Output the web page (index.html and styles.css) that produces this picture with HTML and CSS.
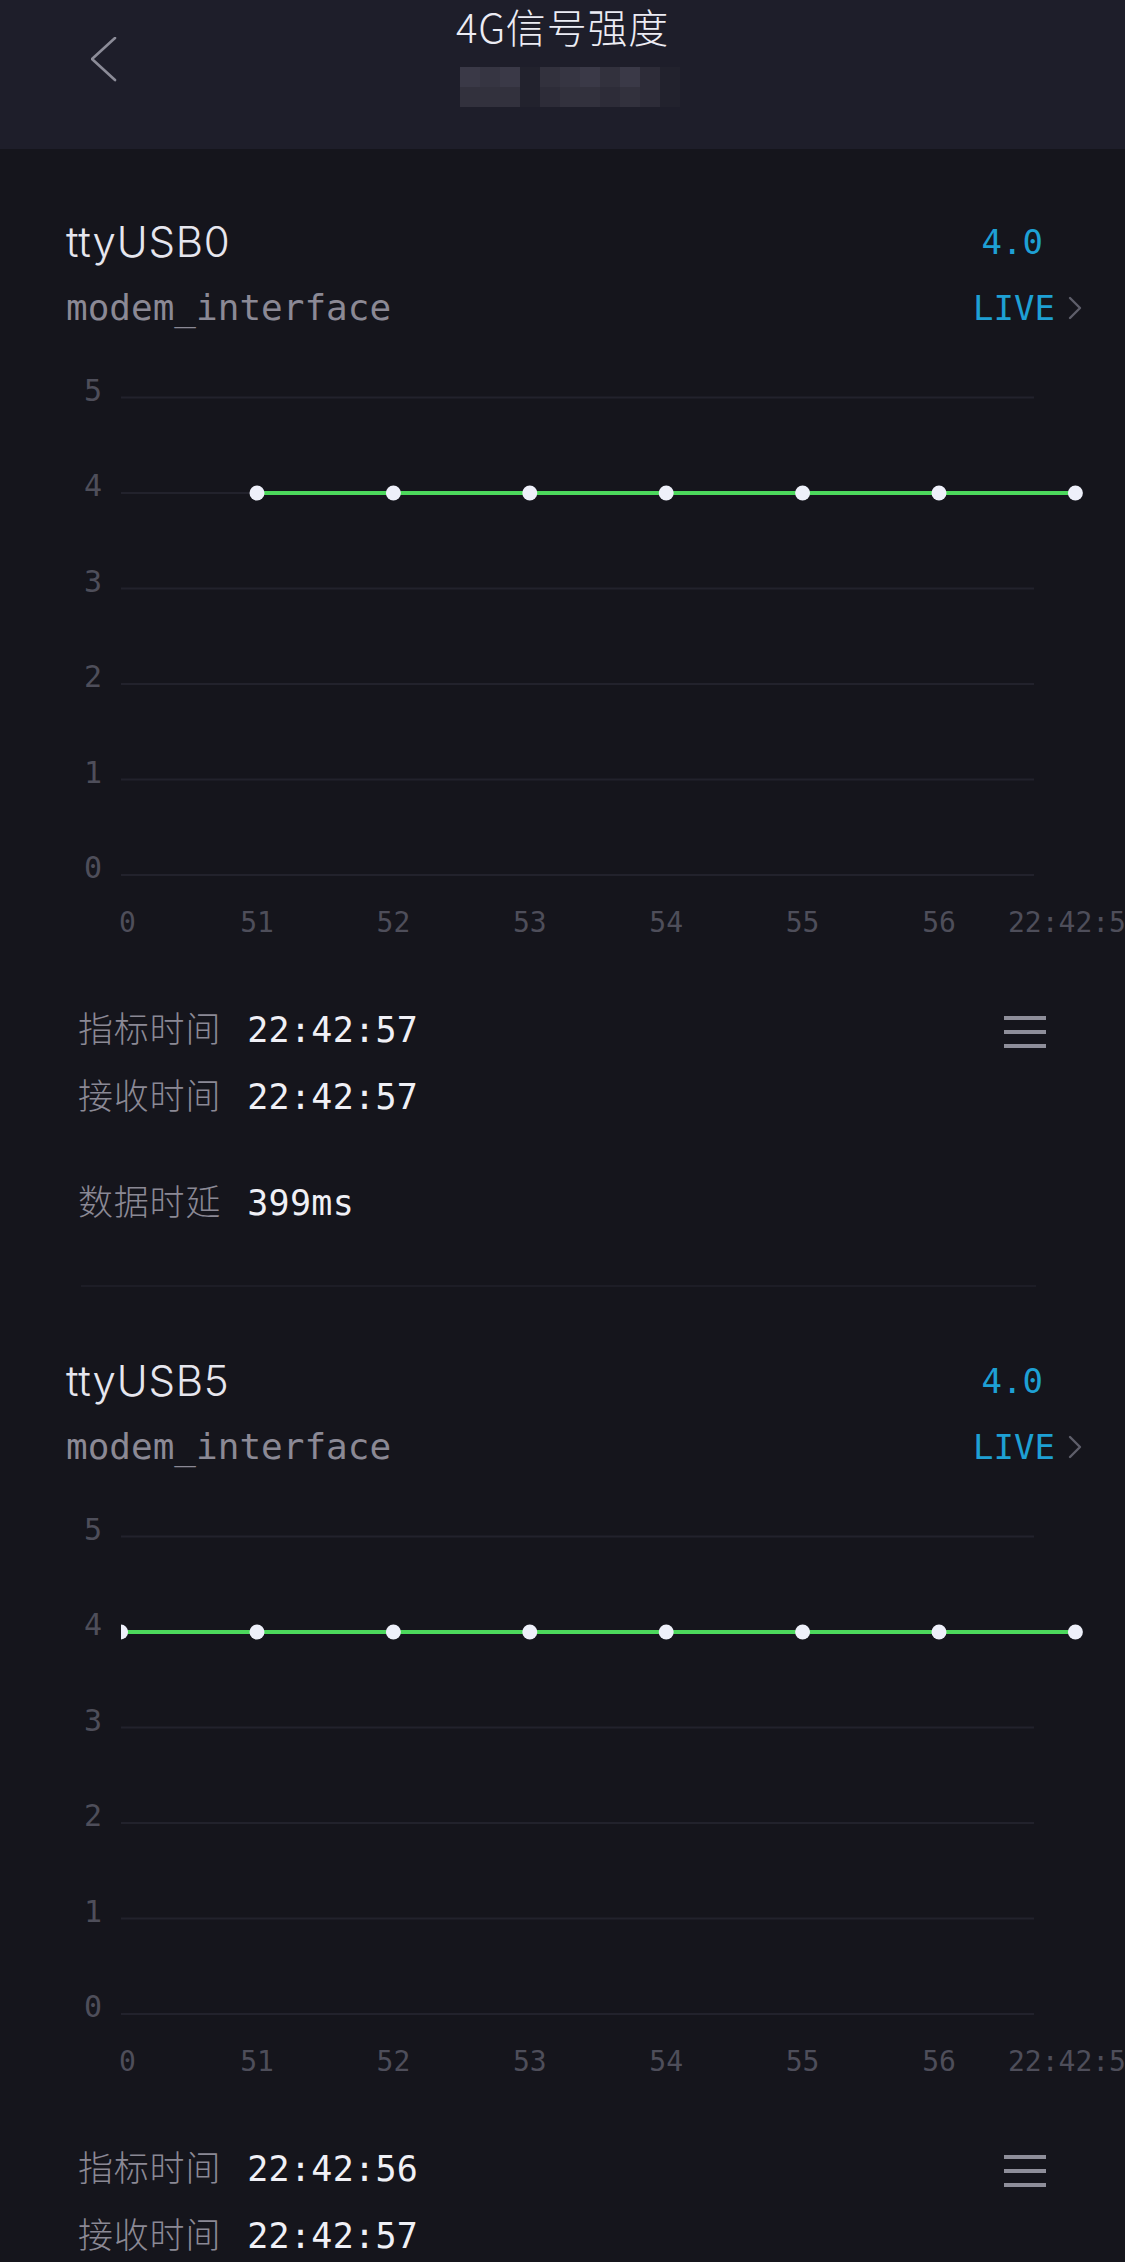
FILE: index.html
```html
<!DOCTYPE html>
<html lang="zh-CN">
<head>
<meta charset="utf-8">
<title>4G信号强度</title>
<link rel="stylesheet" href="styles.css">
</head>
<body>
<header class="topbar">
  <div class="back">
    <svg width="26" height="46" viewBox="0 0 26 46"><polyline class="back-stroke" points="24,1 1,22 24,43"/></svg>
  </div>
  <div class="titles">
    <h1 class="title">4G信号强度</h1>
    <div class="mosaic">
      <i class="s1"></i><i class="s2"></i><i class="s1"></i><i class="s0"></i><i class="s3"></i><i class="s2"></i><i class="s1"></i><i class="s3"></i><i class="s1"></i><i class="s4"></i><i class="s0"></i>
      <i class="s3"></i><i class="s3"></i><i class="s3"></i><i class="s0"></i><i class="s4"></i><i class="s3"></i><i class="s3"></i><i class="s4"></i><i class="s3"></i><i class="s4"></i><i class="s0"></i>
    </div>
  </div>
  <div></div>
</header>

<main>
  <section class="card">
    <div class="card-head">
      <div class="name">ttyUSB0</div>
      <div class="value">4.0</div>
      <div class="iface">modem_interface</div>
      <div class="live">LIVE<svg class="chev" width="16" height="24" viewBox="0 0 16 24"><polyline points="3,2 13,12 3,22"/></svg></div>
    </div>
    <svg class="chart" width="1125" height="622" viewBox="0 0 1125 622">
      <defs><clipPath id="plot1"><rect x="121" y="0" width="1004" height="622"/></clipPath></defs>
      <g class="grid">
        <line x1="121" y1="59.5" x2="1034" y2="59.5"/>
        <line x1="121" y1="155" x2="1034" y2="155"/>
        <line x1="121" y1="250.5" x2="1034" y2="250.5"/>
        <line x1="121" y1="346" x2="1034" y2="346"/>
        <line x1="121" y1="441.5" x2="1034" y2="441.5"/>
        <line x1="121" y1="537" x2="1034" y2="537"/>
      </g>
      <g class="ylab">
        <text x="102" y="62.5">5</text>
        <text x="102" y="158">4</text>
        <text x="102" y="253.5">3</text>
        <text x="102" y="349">2</text>
        <text x="102" y="444.5">1</text>
        <text x="102" y="540">0</text>
      </g>
      <g class="xlab">
        <text class="first" x="119" y="594">0</text>
        <text x="257" y="594">51</text>
        <text x="393.4" y="594">52</text>
        <text x="529.8" y="594">53</text>
        <text x="666.2" y="594">54</text>
        <text x="802.6" y="594">55</text>
        <text x="939" y="594">56</text>
        <text x="1075.4" y="594">22:42:57</text>
      </g>
      <g clip-path="url(#plot1)">
        <polyline class="series" points="257,155 1075.4,155"/>
        <g class="dots">
          <circle cx="257" cy="155" r="7.5"/>
          <circle cx="393.4" cy="155" r="7.5"/>
          <circle cx="529.8" cy="155" r="7.5"/>
          <circle cx="666.2" cy="155" r="7.5"/>
          <circle cx="802.6" cy="155" r="7.5"/>
          <circle cx="939" cy="155" r="7.5"/>
          <circle cx="1075.4" cy="155" r="7.5"/>
        </g>
      </g>
    </svg>
    <div class="info">
      <div class="row">
        <span class="label">指标时间</span><span class="val">22:42:57</span>
        <svg class="menu" width="42" height="34" viewBox="0 0 42 34"><rect x="0" y="0" width="42" height="4"/><rect x="0" y="14" width="42" height="4"/><rect x="0" y="28" width="42" height="4"/></svg>
      </div>
      <div class="row">
        <span class="label">接收时间</span><span class="val">22:42:57</span>
      </div>
      <div class="row delay">
        <span class="label">数据时延</span><span class="val">399ms</span>
      </div>
    </div>
    <div class="divider"></div>
  </section>

  <section class="card">
    <div class="card-head">
      <div class="name">ttyUSB5</div>
      <div class="value">4.0</div>
      <div class="iface">modem_interface</div>
      <div class="live">LIVE<svg class="chev" width="16" height="24" viewBox="0 0 16 24"><polyline points="3,2 13,12 3,22"/></svg></div>
    </div>
    <svg class="chart" width="1125" height="622" viewBox="0 0 1125 622">
      <defs><clipPath id="plot2"><rect x="121" y="0" width="1004" height="622"/></clipPath></defs>
      <g class="grid">
        <line x1="121" y1="59.5" x2="1034" y2="59.5"/>
        <line x1="121" y1="155" x2="1034" y2="155"/>
        <line x1="121" y1="250.5" x2="1034" y2="250.5"/>
        <line x1="121" y1="346" x2="1034" y2="346"/>
        <line x1="121" y1="441.5" x2="1034" y2="441.5"/>
        <line x1="121" y1="537" x2="1034" y2="537"/>
      </g>
      <g class="ylab">
        <text x="102" y="62.5">5</text>
        <text x="102" y="158">4</text>
        <text x="102" y="253.5">3</text>
        <text x="102" y="349">2</text>
        <text x="102" y="444.5">1</text>
        <text x="102" y="540">0</text>
      </g>
      <g class="xlab">
        <text class="first" x="119" y="594">0</text>
        <text x="257" y="594">51</text>
        <text x="393.4" y="594">52</text>
        <text x="529.8" y="594">53</text>
        <text x="666.2" y="594">54</text>
        <text x="802.6" y="594">55</text>
        <text x="939" y="594">56</text>
        <text x="1075.4" y="594">22:42:57</text>
      </g>
      <g clip-path="url(#plot2)">
        <polyline class="series" points="120.6,155 1075.4,155"/>
        <g class="dots">
          <circle cx="120.6" cy="155" r="7.5"/>
          <circle cx="257" cy="155" r="7.5"/>
          <circle cx="393.4" cy="155" r="7.5"/>
          <circle cx="529.8" cy="155" r="7.5"/>
          <circle cx="666.2" cy="155" r="7.5"/>
          <circle cx="802.6" cy="155" r="7.5"/>
          <circle cx="939" cy="155" r="7.5"/>
          <circle cx="1075.4" cy="155" r="7.5"/>
        </g>
      </g>
    </svg>
    <div class="info">
      <div class="row">
        <span class="label">指标时间</span><span class="val">22:42:56</span>
        <svg class="menu" width="42" height="34" viewBox="0 0 42 34"><rect x="0" y="0" width="42" height="4"/><rect x="0" y="14" width="42" height="4"/><rect x="0" y="28" width="42" height="4"/></svg>
      </div>
      <div class="row">
        <span class="label">接收时间</span><span class="val">22:42:57</span>
      </div>
    </div>
  </section>
</main>
</body>
</html>
```

FILE: styles.css
```css
* { box-sizing: border-box; }

html, body {
  margin: 0;
  padding: 0;
  background: #15151c;
}

body {
  font-family: "Noto Sans CJK SC", "Noto Sans", sans-serif;
  color: #e8e8f0;
  overflow-x: hidden;
}

/* ---------- header ---------- */
.topbar {
  height: 149px;
  background: #1e1e2a;
  display: grid;
  grid-template-columns: 1fr auto 1fr;
  align-items: start;
}

.back {
  padding: 37px 0 0 91px;
}

.back svg { display: block; }

.back-stroke {
  fill: none;
  stroke: #8c8c98;
  stroke-width: 2.6;
  stroke-linecap: round;
  stroke-linejoin: round;
}

.titles {
  display: flex;
  flex-direction: column;
  align-items: center;
}

.title {
  margin: 1px 0 0;
  font-family: "Noto Sans CJK SC", sans-serif;
  font-weight: 300;
  font-size: 40px;
  line-height: 50px;
  color: #ececf4;
  letter-spacing: 0.8px;
}

.mosaic {
  margin: 16px 0 0 15px;
  display: grid;
  grid-template-columns: repeat(11, 20px);
  grid-template-rows: 20px 20px;
}

.mosaic i { display: block; }
.s0 { background: #22222d; }
.s1 { background: #3a3947; }
.s2 { background: #363542; }
.s3 { background: #32313d; }
.s4 { background: #2d2c38; }

/* ---------- card ---------- */
.card {
  padding-top: 63px;
}

.card-head {
  display: grid;
  grid-template-columns: 1fr auto;
  grid-template-rows: 66px 60px;
  padding: 0 42px 0 66px;
}

.name {
  font-family: Inter, "Noto Sans", sans-serif;
  font-weight: 300;
  font-size: 42px;
  line-height: 60px;
  color: #e6e6ee;
  letter-spacing: 0.8px;
}

.value {
  font-family: "DejaVu Sans Mono", monospace;
  font-size: 34px;
  line-height: 60px;
  color: #1ea0d4;
  margin-right: 40px;
  justify-self: end;
}

.iface {
  font-family: "DejaVu Sans Mono", monospace;
  font-size: 36px;
  line-height: 60px;
  color: #8b8995;
}

.live {
  display: flex;
  align-items: center;
  font-family: "DejaVu Sans Mono", monospace;
  font-size: 34px;
  line-height: 60px;
  color: #1ea0d4;
  justify-self: end;
}

.chev {
  display: block;
  margin-left: 12px;
}

.chev polyline {
  fill: none;
  stroke: #5e5e6a;
  stroke-width: 2.4;
  stroke-linecap: round;
  stroke-linejoin: round;
}

/* ---------- chart ---------- */
.chart {
  display: block;
}

.grid line {
  stroke: #22222c;
  stroke-width: 2;
}

.ylab text {
  font-family: "DejaVu Sans Mono", monospace;
  font-size: 30px;
  fill: #4e4e5a;
  text-anchor: end;
}

.xlab text {
  font-family: "DejaVu Sans Mono", monospace;
  font-size: 28px;
  fill: #4e4e5a;
  text-anchor: middle;
}

.xlab text.first {
  text-anchor: start;
}

.series {
  fill: none;
  stroke: #4cd85c;
  stroke-width: 4;
}

.dots circle {
  fill: #eef0fa;
}

/* ---------- info ---------- */
.info {
  padding: 33px 0 0 78px;
}

.row {
  display: flex;
  align-items: baseline;
  height: 67px;
}

.row.delay {
  margin-top: 39px;
}

.label {
  font-family: "Noto Sans CJK SC", sans-serif;
  font-weight: 300;
  font-size: 35px;
  line-height: 67px;
  color: #8b8995;
  letter-spacing: 0.8px;
}

.val {
  margin-left: 26px;
  font-family: "DejaVu Sans Mono", monospace;
  font-size: 35px;
  line-height: 67px;
  color: #f0f0f6;
  letter-spacing: 0.3px;
}

.menu {
  display: block;
  margin-left: auto;
  margin-right: 79px;
  margin-top: 23px;
  align-self: flex-start;
  fill: #8e8e9a;
}

.divider {
  height: 2px;
  margin: 52px 89px 1px 81px;
  background: #1d1d26;
}
```
